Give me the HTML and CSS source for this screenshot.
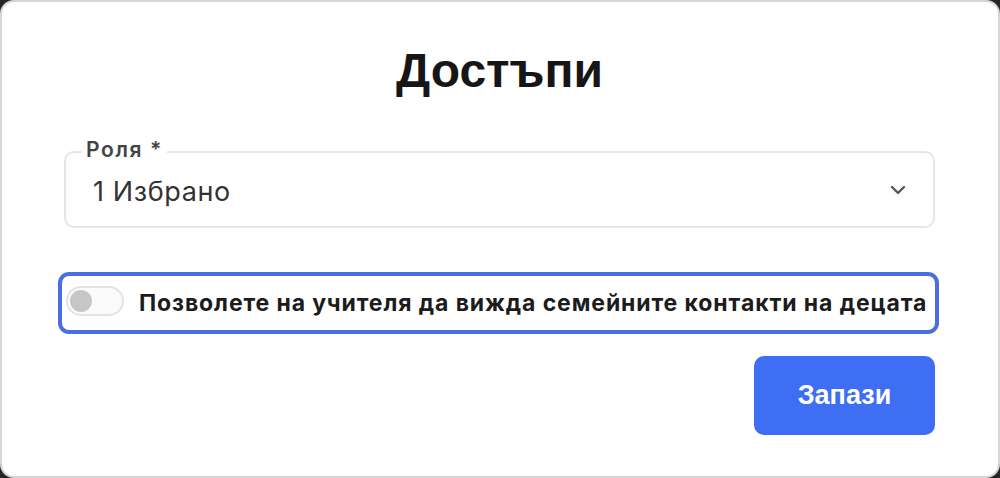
FILE: index.html
```html
<!DOCTYPE html>
<html>
<head>
    <meta charset="utf-8">
    <title>Достъпи</title>
    <link rel="stylesheet" href="styles.css">
</head>
<body>
    <div class="modal">
        <h1 class="title">Достъпи</h1>
        <div class="field">
            <span class="field-label">Роля *</span>
            <div class="select">
                <span class="select-value">1 Избрано</span>
                <svg class="chevron" width="16" height="10" viewBox="0 0 16 10">
                    <path d="M2 2 L8 8 L14 2" fill="none" stroke="#555" stroke-width="2.4" stroke-linecap="round" stroke-linejoin="round"/>
                </svg>
            </div>
        </div>
        <label class="toggle-row">
            <span class="switch"><span class="knob"></span></span>
            <span class="toggle-text">Позволете на учителя да вижда семейните контакти на децата</span>
        </label>
        <div class="actions">
            <button class="save">Запази</button>
        </div>
    </div>
</body>
</html>
```

FILE: styles.css
```css
*{
    box-sizing: border-box;
}

body{
    margin: 0;
    background-color: #262626;
    font-family: "Liberation Sans", Arial, sans-serif;
}

.modal{
    width: 1000px;
    height: 478px;
    background-color: #ffffff;
    border: 2px solid #d6d6d6;
    border-radius: 14px;
    padding: 45px 63px 0 62px;
}

.title{
    margin: 0;
    text-align: center;
    font-size: 48px;
    line-height: 48px;
    font-weight: 700;
    color: #161616;
}

.field{
    position: relative;
    margin-top: 56px;
}

.field-label{
    position: absolute;
    left: 18px;
    top: -12px;
    padding: 0 4px;
    background-color: #ffffff;
    font-family: Inter, "Liberation Sans", sans-serif;
    font-size: 21px;
    line-height: 22px;
    color: #444444;
    font-weight: 600;
    letter-spacing: 1.6px;
}

.select{
    height: 77px;
    border: 2px solid #e6e6e6;
    border-radius: 10px;
    display: flex;
    align-items: center;
    padding: 0 27px 0 27px;
}

.select-value{
    flex: 1;
    font-family: Inter, "Liberation Sans", sans-serif;
    font-size: 27px;
    letter-spacing: 0.6px;
    color: #333333;
    padding-top: 3px;
}

.chevron{
    display: block;
}

.toggle-row{
    display: flex;
    align-items: center;
    height: 62px;
    margin: 44px -4px 0 -6px;
    border: 4px solid #4a6ee0;
    border-radius: 11px;
    padding: 0 4px 4px 4px;
}

.switch{
    width: 58px;
    height: 30px;
    border: 2px solid #e3e3e3;
    border-radius: 15px;
    background-color: #fbfbfb;
    display: flex;
    align-items: center;
    padding-left: 2px;
    flex-shrink: 0;
}

.knob{
    width: 22px;
    height: 22px;
    border-radius: 50%;
    background-color: #c6c6c6;
}

.toggle-text{
    margin-left: 15px;
    margin-top: 4px;
    font-family: Inter, "Liberation Sans", sans-serif;
    font-size: 23px;
    letter-spacing: 0.9px;
    font-weight: 700;
    color: #1c1c1c;
    white-space: nowrap;
}

.actions{
    display: flex;
    justify-content: flex-end;
    margin-top: 22px;
}

.save{
    width: 181px;
    height: 79px;
    border: none;
    border-radius: 10px;
    background-color: #3e6ef4;
    color: #ffffff;
    font-family: "Liberation Sans", Arial, sans-serif;
    font-size: 27px;
    font-weight: 700;
}
```
